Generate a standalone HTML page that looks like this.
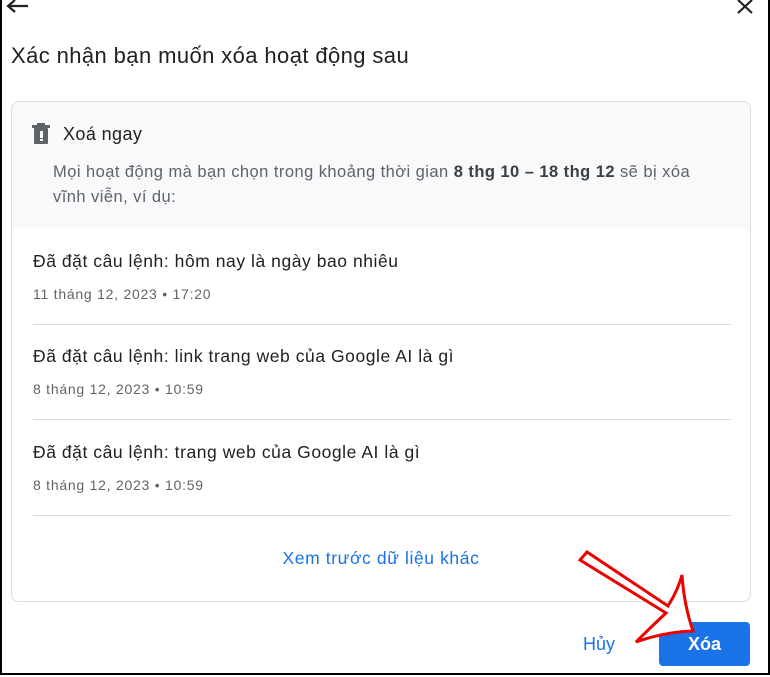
<!DOCTYPE html>
<html><head><meta charset="utf-8"><style>
body{margin:0;width:770px;height:677px;position:relative;overflow:hidden;background:#fff;font-family:"Liberation Sans",Arial,sans-serif;color:#202124}
.frame{position:absolute;left:0;top:0;width:766px;height:673px;border:2px solid #000;border-top:none}
.abs{position:absolute}
.card{position:absolute;left:11px;top:101px;width:738px;height:499px;border:1px solid #dadce0;border-radius:8px;overflow:hidden}
.hd{background:#f8f9fa;height:127px}
.item{position:absolute;left:21px;width:698px;border-bottom:1px solid #dadce0;height:95px}
.t{position:absolute;top:22px;font-size:17.5px;letter-spacing:0.55px;color:#202124}
.d{position:absolute;top:57px;font-size:14px;letter-spacing:0.75px;color:#5f6368}
</style></head><body>
<div class="frame"></div>
<svg class="abs" style="left:4px;top:0" width="26" height="16"><path d="M24 6H5M11 0L4 6l7 6" stroke="#202124" stroke-width="2.2" fill="none"/></svg>
<svg class="abs" style="left:736px;top:0" width="20" height="14"><path d="M2 0l14 13M16 0L2 13" stroke="#202124" stroke-width="2.2"/></svg>
<div class="abs" style="left:11px;top:43px;font-size:22px;letter-spacing:0.4px">Xác nhận bạn muốn xóa hoạt động sau</div>
<div class="card">
 <div class="hd">
  <svg class="abs" style="left:20px;top:21px" width="18" height="22"><rect x="0" y="2" width="18" height="3" fill="#5f6368"/><rect x="5" y="0" width="8" height="3" fill="#5f6368"/><rect x="2" y="5" width="14" height="16" rx="1" fill="#5f6368"/><rect x="8" y="8" width="3" height="7" fill="#fff"/><rect x="8" y="16" width="3" height="2" fill="#fff"/></svg>
  <div class="abs" style="left:51px;top:22px;font-size:18px;letter-spacing:0.4px">Xoá ngay</div>
  <div class="abs" style="left:41px;top:58px;font-size:16.5px;letter-spacing:0.45px;color:#5f6368;line-height:25px;width:660px">Mọi hoạt động mà bạn chọn trong khoảng thời gian <b style="color:#3c4043">8 thg 10 – 18 thg 12</b> sẽ bị xóa vĩnh viễn, ví dụ:</div>
 </div>
 <div class="item" style="top:127px"><div class="t">Đã đặt câu lệnh: hôm nay là ngày bao nhiêu</div><div class="d">11 tháng 12, 2023 • 17:20</div></div>
 <div class="item" style="top:222px"><div class="t">Đã đặt câu lệnh: link trang web của Google AI là gì</div><div class="d">8 tháng 12, 2023 • 10:59</div></div>
 <div class="item" style="top:318px"><div class="t">Đã đặt câu lệnh: trang web của Google AI là gì</div><div class="d">8 tháng 12, 2023 • 10:59</div></div>
 <div class="abs" style="left:0;width:738px;top:446px;text-align:center;font-size:17.5px;letter-spacing:0.6px;color:#1a73e8">Xem trước dữ liệu khác</div>
</div>
<div class="abs" style="left:583px;top:634px;font-size:18px;color:#1a73e8">Hủy</div>
<div class="abs" style="left:659px;top:622px;width:91px;height:44px;background:#1a73e8;border-radius:4px;color:#fff;font-weight:bold;font-size:18px;text-align:center;line-height:44px">Xóa</div>
<svg class="abs" style="left:0;top:0" width="770" height="677"><path d="M587 552 L668 606 Q678 590 682 575 Q684 605 693 631 Q664 632 636 642 Q652 626 666 613 L580 560 Z" fill="#fff" stroke="#e00" stroke-width="3" stroke-linejoin="miter"/></svg>
</body></html>
